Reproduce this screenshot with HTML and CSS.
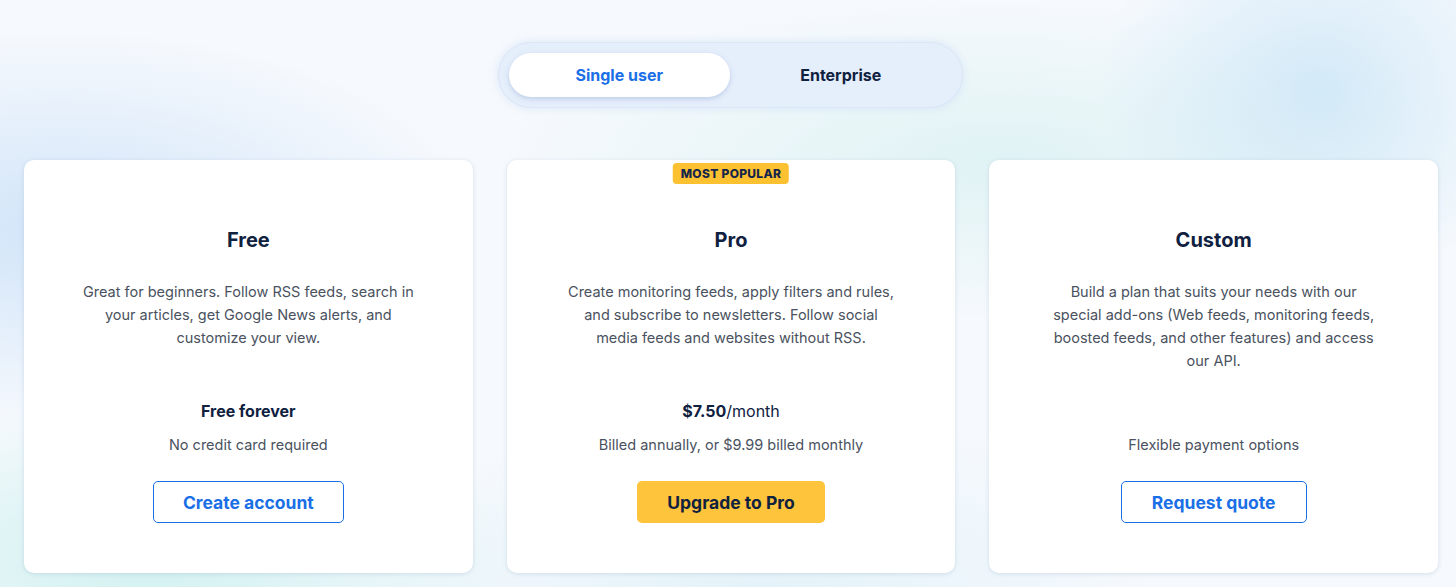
FILE: index.html
```html
<!DOCTYPE html>
<html lang="en">
<head>
<meta charset="utf-8">
<title>Pricing</title>
<link rel="stylesheet" href="styles.css">
</head>
<body>
<main class="page">
  <div class="toggle-row">
    <div class="toggle">
      <button class="toggle-opt active">Single user</button>
      <button class="toggle-opt">Enterprise</button>
    </div>
  </div>
  <section class="plans">
    <article class="card">
      <h2 class="plan-name">Free</h2>
      <p class="plan-desc">Great for beginners. Follow RSS feeds, search in your articles, get Google News alerts, and customize your view.</p>
      <p class="plan-price"><strong>Free forever</strong></p>
      <p class="plan-note">No credit card required</p>
      <a class="btn btn-outline btn-free" href="#">Create account</a>
    </article>
    <article class="card">
      <span class="badge">Most popular</span>
      <h2 class="plan-name">Pro</h2>
      <p class="plan-desc">Create monitoring feeds, apply filters and rules, and subscribe to newsletters. Follow social media feeds and websites without RSS.</p>
      <p class="plan-price"><strong>$7.50</strong>/month</p>
      <p class="plan-note">Billed annually, or $9.99 billed monthly</p>
      <a class="btn btn-yellow" href="#">Upgrade to Pro</a>
    </article>
    <article class="card">
      <h2 class="plan-name">Custom</h2>
      <p class="plan-desc">Build a plan that suits your needs with our special add-ons (Web feeds, monitoring feeds, boosted feeds, and other features) and access our API.</p>
      <p class="plan-price"></p>
      <p class="plan-note">Flexible payment options</p>
      <a class="btn btn-outline btn-custom" href="#">Request quote</a>
    </article>
  </section>
</main>
</body>
</html>
```
FILE: styles.css
```css
* { box-sizing: border-box; }
html, body { margin: 0; padding: 0; }
body {
  width: 1456px;
  height: 587px;
  overflow: hidden;
  font-family: "Inter", "Roboto", "Liberation Sans", sans-serif;
  color: #0f213f;
  background:
    radial-gradient(ellipse 220px 200px at 1320px 90px, rgba(200, 228, 246, 0.75), rgba(200, 228, 246, 0) 100%),
    radial-gradient(ellipse 420px 200px at 60px 230px, rgba(205, 226, 248, 0.9), rgba(205, 226, 248, 0) 100%),
    radial-gradient(ellipse 380px 160px at 150px 560px, rgba(205, 240, 238, 0.9), rgba(205, 240, 238, 0) 100%),
    radial-gradient(ellipse 500px 160px at 1000px 160px, rgba(214, 240, 240, 0.7), rgba(214, 240, 240, 0) 100%),
    radial-gradient(ellipse 400px 200px at 760px 600px, rgba(214, 238, 246, 0.6), rgba(214, 238, 246, 0) 100%),
    #f6f9fd;
}
.page {
  padding-top: 42px;
}
.toggle-row {
  display: flex;
  justify-content: center;
  padding-left: 4px;
}
.toggle {
  display: flex;
  width: 465px;
  height: 66px;
  padding: 10px;
  border-radius: 33px;
  background: #e5eefb;
  border: 1px solid #dbe6f7;
  box-shadow: 0 0 8px rgba(200, 218, 245, 0.6);
}
.toggle-opt {
  flex: 1;
  border: 0;
  background: transparent;
  border-radius: 23px;
  font-family: inherit;
  font-size: 16px;
  font-weight: 700;
  color: #0f213f;
  cursor: pointer;
}
.toggle-opt.active {
  background: #ffffff;
  color: #1a6fe6;
  box-shadow: 0 2px 5px rgba(120, 150, 200, 0.35);
}
.plans {
  display: grid;
  grid-template-columns: repeat(3, 1fr);
  gap: 34px;
  padding: 0 18px 0 24px;
  margin-top: 52px;
}
.card {
  position: relative;
  background: #ffffff;
  border-radius: 10px;
  height: 413px;
  padding: 66px 20px 0;
  display: flex;
  flex-direction: column;
  align-items: center;
  text-align: center;
  box-shadow: 0 1px 4px rgba(150, 175, 200, 0.35);
}
.badge {
  position: absolute;
  top: 3px;
  left: 50%;
  transform: translateX(-50%);
  background: #fcc131;
  color: #14244a;
  font-size: 12px;
  font-weight: 800;
  letter-spacing: 0.3px;
  text-transform: uppercase;
  padding: 0 8px;
  height: 21px;
  line-height: 21px;
  border-radius: 4px;
}
.plan-name {
  margin: 0;
  font-size: 20px;
  line-height: 28px;
  font-weight: 700;
  color: #0f213f;
}
.plan-desc {
  margin: 26px 0 0;
  max-width: 335px;
  height: 92px;
  font-size: 14.5px;
  line-height: 23px;
  color: #4a5260;
}
.plan-price {
  margin: 27px 0 0;
  height: 24px;
  font-size: 16px;
  line-height: 24px;
  color: #0f213f;
}
.plan-price strong { font-weight: 700; }
.plan-note {
  margin: 10px 0 0;
  font-size: 14.5px;
  line-height: 23px;
  color: #4a5260;
}
.btn {
  margin-top: 25px;
  height: 42px;
  display: flex;
  align-items: center;
  justify-content: center;
  border-radius: 5px;
  font-size: 17.5px;
  font-weight: 700;
  text-decoration: none;
}
.btn-outline {
  border: 1px solid #1a6fe6;
  color: #1a6fe6;
  background: #ffffff;
}
.btn-free { width: 191px; }
.btn-custom { width: 186px; }
.btn-yellow {
  width: 188px;
  background: #fec43b;
  color: #0f213f;
}
```
